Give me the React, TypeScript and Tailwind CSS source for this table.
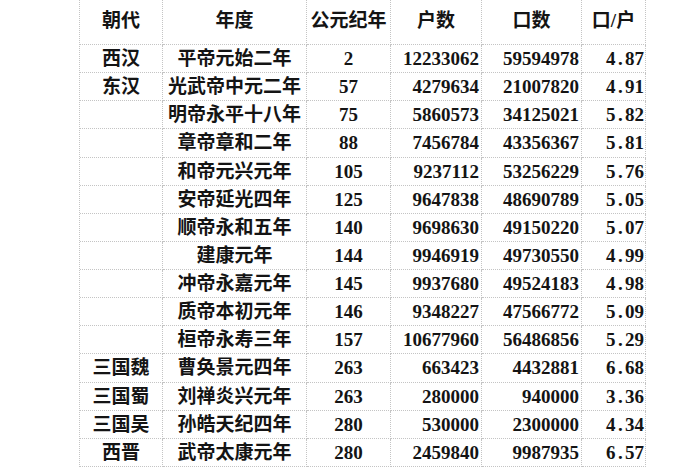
const rows: [string, string, string, string, string, string][] = [
  ['西汉', '平帝元始二年', '2', '12233062', '59594978', '4.87'],
  ['东汉', '光武帝中元二年', '57', '4279634', '21007820', '4.91'],
  ['', '明帝永平十八年', '75', '5860573', '34125021', '5.82'],
  ['', '章帝章和二年', '88', '7456784', '43356367', '5.81'],
  ['', '和帝元兴元年', '105', '9237112', '53256229', '5.76'],
  ['', '安帝延光四年', '125', '9647838', '48690789', '5.05'],
  ['', '顺帝永和五年', '140', '9698630', '49150220', '5.07'],
  ['', '建康元年', '144', '9946919', '49730550', '4.99'],
  ['', '冲帝永嘉元年', '145', '9937680', '49524183', '4.98'],
  ['', '质帝本初元年', '146', '9348227', '47566772', '5.09'],
  ['', '桓帝永寿三年', '157', '10677960', '56486856', '5.29'],
  ['三国魏', '曹奂景元四年', '263', '663423', '4432881', '6.68'],
  ['三国蜀', '刘禅炎兴元年', '263', '280000', '940000', '3.36'],
  ['三国吴', '孙皓天纪四年', '280', '530000', '2300000', '4.34'],
  ['西晋', '武帝太康元年', '280', '2459840', '9987935', '6.57'],
]

const headers = ['朝代', '年度', '公元纪年', '户数', '口数', '口/户']

const cell = 'flex items-center border-r border-b border-dotted border-[#c4c4c4]'

function Ratio({ value }: { value: string }) {
  const [a, b] = value.split('.')
  return (
    <span>
      {a}
      <span className="inline-block w-[0.5em] text-center">.</span>
      {b}
    </span>
  )
}

export default function App() {
  return (
    <div
      className="w-[700px] h-[470px] overflow-hidden bg-white text-[#141414]"
      style={{ fontFamily: '"Liberation Serif", "Noto Sans CJK SC", serif' }}
    >
      <div className="ml-[79px] grid w-[566px] grid-cols-[83px_144px_84px_91px_100px_64px] border-l border-dotted border-[#c4c4c4] text-[19px] font-bold leading-none">
        {headers.map((h) => (
          <div key={h} className={`${cell} h-[45px] justify-center pb-[3px]`}>
            {h}
          </div>
        ))}
        {rows.map((r, ri) => (
          <div key={ri} className="contents">
            <div className={`${cell} h-[28.13px] justify-center`}>{r[0]}</div>
            <div className={`${cell} h-[28.13px] justify-center`}>{r[1]}</div>
            <div className={`${cell} h-[28.13px] justify-center`}>{r[2]}</div>
            <div className={`${cell} h-[28.13px] justify-end pr-[2px]`}>{r[3]}</div>
            <div className={`${cell} h-[28.13px] justify-end pr-[2px]`}>{r[4]}</div>
            <div className={`${cell} h-[28.13px] justify-end pr-[1px]`}>
              <Ratio value={r[5]} />
            </div>
          </div>
        ))}
      </div>
    </div>
  )
}
